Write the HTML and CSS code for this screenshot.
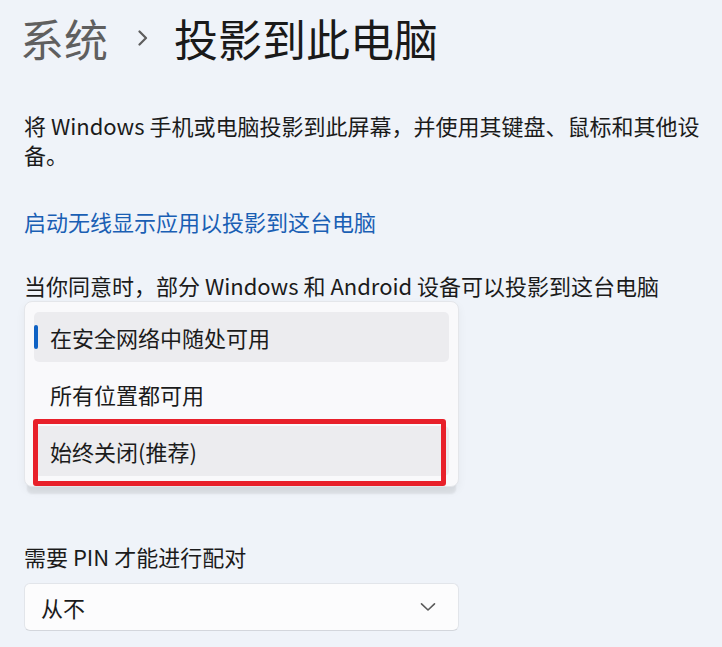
FILE: index.html
```html
<!DOCTYPE html>
<html lang="zh-CN">
<head>
<meta charset="utf-8">
<link rel="stylesheet" href="styles.css">
</head>
<body>
<div class="page">
  <div class="crumb">
    <span class="crumb-parent">系统</span>
    <svg class="crumb-sep" width="14" height="16" viewBox="0 0 14 16"><path d="M3.5 1.5 L10 8 L3.5 14.5" fill="none" stroke="#5d5d5d" stroke-width="2.2" stroke-linecap="round" stroke-linejoin="round"/></svg>
    <span class="crumb-current">投影到此电脑</span>
  </div>

  <p class="desc">将 Windows 手机或电脑投影到此屏幕，并使用其键盘、鼠标和其他设备。</p>

  <a class="link">启动无线显示应用以投影到这台电脑</a>

  <div class="section">
    <div class="label">当你同意时，部分 Windows 和 Android 设备可以投影到这台电脑</div>
    <div class="combo-wrap">
      <div class="combo"></div>
      <div class="flyout">
        <div class="item selected"><span class="indicator"></span>在安全网络中随处可用</div>
        <div class="item">所有位置都可用</div>
        <div class="item hover">始终关闭(推荐)<span class="mark"></span></div>
      </div>
    </div>
  </div>

  <div class="section second">
    <div class="label">需要 PIN 才能进行配对</div>
    <div class="combo">
      <span>从不</span>
      <svg class="chev" width="16" height="10" viewBox="0 0 16 10"><path d="M1.5 1.8 L8 8 L14.5 1.8" fill="none" stroke="#5a5a5a" stroke-width="1.6" stroke-linecap="round" stroke-linejoin="round"/></svg>
    </div>
  </div>
</div>
</body>
</html>
```

FILE: styles.css
```css
html, body {
  margin: 0;
  padding: 0;
  background: #eff3f9;
}
body {
  font-family: "Noto Sans CJK SC", "Noto Sans", sans-serif;
  color: #1b1b1b;
  width: 722px;
  height: 647px;
  overflow: hidden;
}
.page {
  padding: 8px 0 0 24px;
}
.crumb {
  display: flex;
  align-items: center;
  height: 60px;
  margin-left: -4px;
  font-size: 44px;
  line-height: 60px;
}
.crumb-parent {
  color: #5f5f5f;
}
.crumb-sep {
  margin: 0 24px 0 28px;
}
.crumb-current {
  color: #1a1a1a;
}
.desc {
  margin: 43px 0 0 0;
  width: 690px;
  font-size: 22px;
  line-height: 29px;
}
.link {
  display: block;
  margin-top: 38px;
  font-size: 22px;
  line-height: 29px;
  color: #1a5fb4;
}
.section {
  margin-top: 35px;
}
.label {
  font-size: 22px;
  line-height: 29px;
}
.combo-wrap {
  position: relative;
  margin-top: 12px;
  width: 435px;
}
.combo {
  display: flex;
  align-items: center;
  justify-content: space-between;
  box-sizing: border-box;
  width: 435px;
  height: 48px;
  padding: 0 22px 0 16px;
  background: #fcfcfd;
  border: 1px solid #e2e5ea;
  border-bottom-color: #d3d6dc;
  border-radius: 6px;
  font-size: 22px;
}
.chev {
  display: block;
}
.flyout {
  position: absolute;
  top: -11px;
  left: 0;
  width: 435px;
  box-sizing: border-box;
  padding: 10px 9px 10px 9px;
  background: #f9f9fb;
  border: 1px solid #e4e6ea;
  border-radius: 8px;
  box-shadow: 0 10px 2px -3px rgba(0, 0, 0, 0.07), 0 4px 10px rgba(0, 0, 0, 0.05);
  display: flex;
  flex-direction: column;
  gap: 7px;
}
.item {
  position: relative;
  height: 50px;
  display: flex;
  align-items: center;
  padding-left: 16px;
  border-radius: 5px;
  font-size: 22px;
  color: #1b1b1b;
}
.item.selected {
  background: #ececef;
}
.item.hover {
  background: #ececef;
}
.indicator {
  position: absolute;
  left: 0;
  top: 13px;
  width: 4px;
  height: 24px;
  border-radius: 2px;
  background: #0f62c4;
}
.mark {
  position: absolute;
  top: -7px;
  left: -1px;
  right: 3px;
  bottom: -10px;
  border: 5px solid #e8202a;
  border-radius: 3px;
}
.second {
  margin-top: 182px;
}
.second .combo {
  margin-top: 12px;
}
```
